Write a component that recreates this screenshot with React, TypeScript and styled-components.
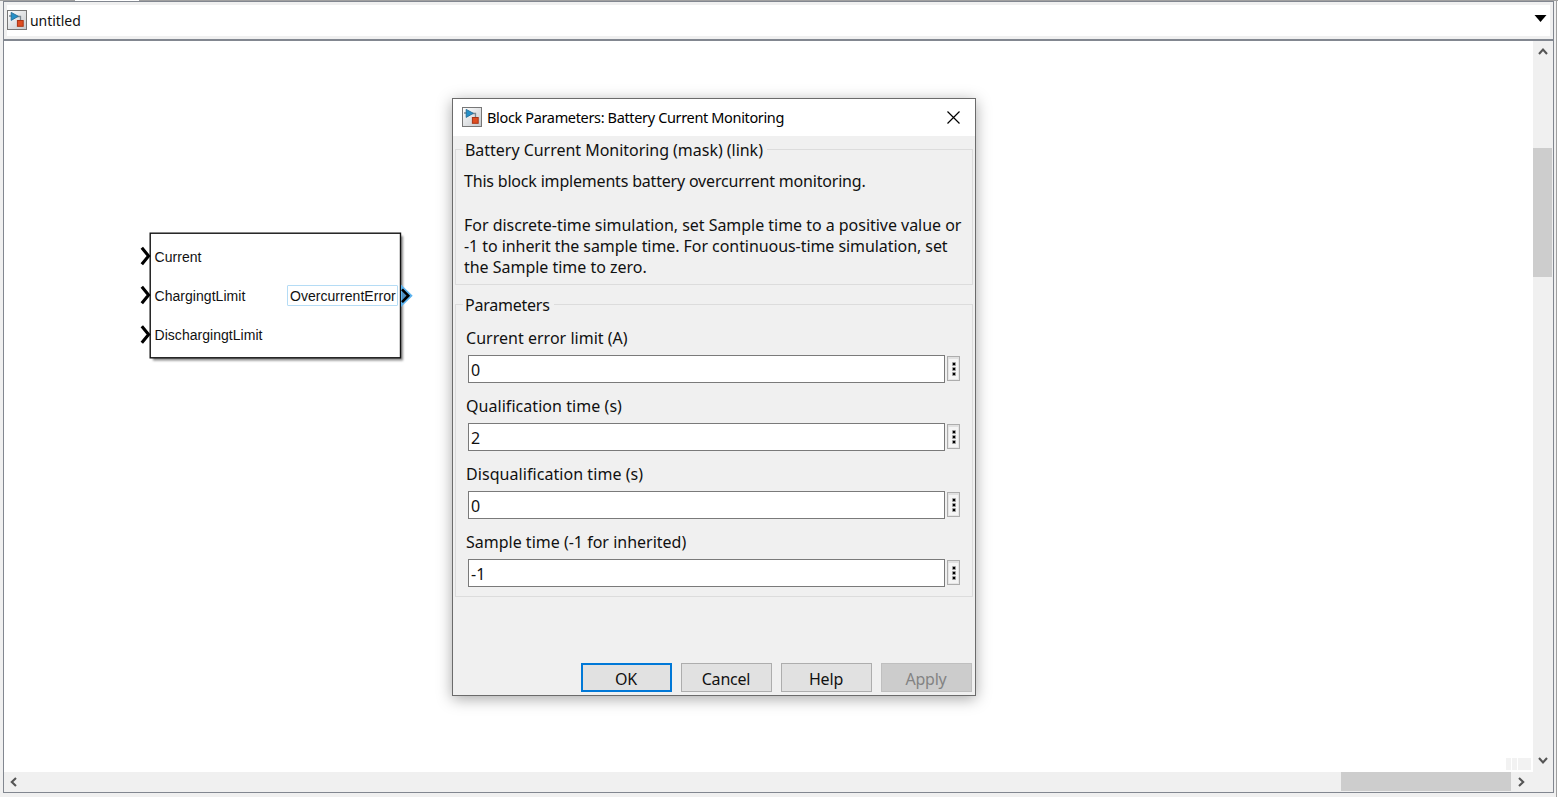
import React from 'react';
import styled, { createGlobalStyle, css } from 'styled-components';

const GlobalStyle = createGlobalStyle`
  * { box-sizing: border-box; }
  body { margin: 0; background: #f0f0f0; overflow: hidden; }
`;

const uiFont = css`
  font-family: 'Noto Sans', 'Open Sans', sans-serif;
  color: #111;
  white-space: pre;
`;

const Page = styled.div`
  position: relative;
  width: 1558px;
  height: 797px;
  display: flex;
  flex-direction: column;
  background: #f0f0f0;
`;

const TabEdge = styled.div`
  height: 1px;
  padding-left: 75px;
  background: #a0a0a0;
`;

const ActiveTab = styled.div`
  width: 64px;
  height: 1px;
  background: #fff;
`;

const Workspace = styled.div`
  display: flex;
  justify-content: space-between;
  height: 796px;
  padding-left: 3px;
`;

const OuterEdge = styled.div`
  width: 2px;
  border-left: 1px solid #a0a0a0;
  background: #fff;
`;

const Frame = styled.div`
  width: 1551px;
  height: 792px;
  border: 1px solid #828790;
  display: flex;
  flex-direction: column;
`;

const PathBar = styled.div`
  height: 39px;
  padding: 3px 3px 2px;
  border-bottom: 2px solid #828790;
  flex: none;
`;

const PathField = styled.div`
  height: 31px;
  display: flex;
  align-items: center;
  background: #fff;
`;

const PathText = styled.span`
  ${uiFont}
  flex: 1;
  margin-left: 3px;
  font-size: 14px;
  line-height: 20px;
  letter-spacing: -0.05px;
`;

const DropArrow = styled.svg`
  margin: -4px 3px 0 0;
`;

const Main = styled.div`
  display: flex;
  height: 751px;
`;

const CanvasColumn = styled.div`
  width: 1529px;
  display: flex;
  flex-direction: column;
`;

const Canvas = styled.div`
  position: relative;
  height: 731px;
  background: #fff;
`;

const VScroll = styled.div`
  width: 20px;
  display: flex;
  flex-direction: column;
  align-items: center;
  background: #f0f0f0;
  height: 751px;
`;

const VThumb = styled.div`
  width: 19px;
  height: 129px;
  margin: 91px 1px 478px 0;
  background: #cdcdcd;
`;

const HScroll = styled.div`
  height: 20px;
  display: flex;
  align-items: center;
  background: #f0f0f0;
`;

const HThumb = styled.div`
  width: 170px;
  height: 19px;
  margin: 0 5px 1px 1310px;
  background: #cdcdcd;
`;

const SizeMarks = styled.div`
  position: absolute;
  right: 2px;
  bottom: 2px;
  display: flex;
  gap: 1px;
`;

const Mark = styled.i<{ $w: number }>`
  width: ${p => p.$w}px;
  height: 12px;
  background: #f2f2f2;
`;

const Block = styled.div`
  position: absolute;
  left: 136px;
  top: 184px;
  width: 280px;
  height: 140px;
`;

const BlockBody = styled.svg`
  position: absolute;
  inset: 0;
`;

const PortLabel = styled.span<{ $x: number; $y: number }>`
  position: absolute;
  left: ${p => p.$x}px;
  top: ${p => p.$y}px;
  font: 14px/20px 'Liberation Sans', Arial, sans-serif;
  letter-spacing: 0.04px;
  color: #111;
  white-space: pre;
`;

const Dialog = styled.div`
  position: absolute;
  left: 452px;
  top: 98px;
  width: 524px;
  height: 598px;
  border: 1px solid #6b6b6b;
  background: #f0f0f0;
  box-shadow: 0 3px 14px rgba(0, 0, 0, 0.34);
  display: flex;
  flex-direction: column;
`;

const TitleBar = styled.div`
  height: 37px;
  flex: none;
  padding: 0 15px 1px 9px;
  display: flex;
  align-items: center;
  background: #fff;
`;

const Title = styled.span`
  ${uiFont}
  flex: 1;
  margin-left: 5px;
  font-size: 14.5px;
  line-height: 20px;
  letter-spacing: -0.35px;
  color: #000;
`;

const Group = styled.div<{ $top: number; $h: number }>`
  margin: ${p => p.$top}px 2px 0;
  height: ${p => p.$h}px;
  border: 1px solid #dcdcdc;
  display: flex;
  flex-direction: column;
  align-items: flex-start;
  flex: none;
`;

const Legend = styled.span<{ $s: number }>`
  ${uiFont}
  font-size: 16px;
  line-height: 22px;
  letter-spacing: ${p => p.$s}px;
  margin: -11px 0 0 7px;
  padding: 0 4px 0 2px;
  background: #f0f0f0;
`;

const Line = styled.span<{ $s: number; $gap?: number }>`
  ${uiFont}
  font-size: 16px;
  line-height: 21px;
  height: 21px;
  letter-spacing: ${p => p.$s}px;
  margin: ${p => p.$gap ?? 0}px 0 0 8px;
`;

const Field = styled.label<{ $first?: boolean }>`
  display: flex;
  flex-direction: column;
  align-items: flex-start;
  height: 68px;
  margin-top: ${p => (p.$first ? 11 : 0)}px;
  flex: none;
`;

const FieldLabel = styled.span<{ $s: number }>`
  ${uiFont}
  font-size: 16px;
  line-height: 22px;
  letter-spacing: ${p => p.$s}px;
  margin-left: 10px;
`;

const FieldRow = styled.div`
  display: flex;
  align-items: flex-start;
  gap: 2px;
  margin: 6px 0 0 12px;
`;

const Input = styled.div`
  ${uiFont}
  width: 477px;
  height: 28px;
  padding: 2px 2px 0;
  border: 1px solid #7a7a7a;
  background: #fff;
  font-size: 16px;
  line-height: 24px;
`;

const More = styled.div`
  width: 13px;
  height: 25px;
  margin-top: 1px;
  border: 1px solid #adadad;
  background: #f5f5f5;
  box-shadow: inset 0 2px #e1e1e1, inset 0 0 0 1px #e6e6e6;
  display: flex;
  flex-direction: column;
  align-items: center;
  gap: 1px;
  padding: 5px 0 0 1px;
`;

const Dot = styled.i`
  width: 4px;
  height: 4px;
  background: #000;
  border: 1px solid #999;
  border-radius: 1px;
`;

const Buttons = styled.div`
  display: flex;
  gap: 9px;
  margin: auto 3px 3px auto;
`;

const Button = styled.div<{ $kind?: 'default' | 'disabled' }>`
  ${uiFont}
  width: 91px;
  height: 29px;
  display: flex;
  align-items: center;
  justify-content: center;
  padding: 2px 1px 0 0;
  font-size: 16px;
  line-height: 22px;
  letter-spacing: -0.2px;
  border: 1px solid #adadad;
  background: #e1e1e1;
  ${p => p.$kind === 'default' && css`border: 2px solid #0078d7;`}
  ${p => p.$kind === 'disabled' && css`
    background: #ccc;
    border-color: #bfbfbf;
    color: #838383;
  `}
`;

const IconSvg = styled.svg`
  flex: none;
  margin-bottom: 1px;
`;

const ModelIcon = () => (
  <IconSvg width="20" height="20" viewBox="0 0 20 20">
    <defs>
      <linearGradient id="tile" x1="0" y1="0" x2="1" y2="1">
        <stop offset="0" stopColor="#fff" />
        <stop offset="1" stopColor="#c4c8cc" />
      </linearGradient>
    </defs>
    <rect x=".5" y=".5" width="19" height="19" fill="url(#tile)" stroke="#777" />
    <path d="M2 6H5M10 6.5H13.5V10" fill="none" stroke="#7d8890" strokeWidth="1.3" />
    <path d="M4.2 2.4L11.3 6.3L4.2 10.4Z" fill="#2590c8" stroke="#236c96" strokeWidth=".9" />
    <rect x="10.4" y="10.5" width="5.8" height="5.8" fill="#df4d21" stroke="#a83415" />
  </IconSvg>
);

const chevrons = {
  up: 'M1 7L5 2.6L9 7',
  down: 'M1 3L5 7.4L9 3',
  left: 'M7 1L2.8 5L7 9',
  right: 'M3 1L7.2 5L3 9',
};

const ChevronSvg = styled.svg<{ $m: string }>`
  flex: none;
  margin: ${p => p.$m};
`;

const Chevron = ({ dir, m }: { dir: keyof typeof chevrons; m: string }) => (
  <ChevronSvg width="10" height="10" $m={m}>
    <path d={chevrons[dir]} fill="none" stroke="#555" strokeWidth="2.1" />
  </ChevronSvg>
);

const fields = [
  { label: 'Current error limit (A)', value: '0', s: 0.02 },
  { label: 'Qualification time (s)', value: '2', s: 0.05 },
  { label: 'Disqualification time (s)', value: '0', s: 0.06 },
  { label: 'Sample time (-1 for inherited)', value: '-1', s: 0 },
];

const MonitoringBlock = () => (
  <Block>
    <BlockBody width="280" height="140">
      <defs>
        <filter id="soft" x="-10%" y="-10%" width="120%" height="125%">
          <feGaussianBlur stdDeviation="1.3" />
        </filter>
      </defs>
      <rect x="13" y="11" width="250" height="124.5" fill="#8a8a8a" filter="url(#soft)" />
      <rect x="10.2" y="8.2" width="250.3" height="124.6" fill="#fff" stroke="#111" strokeWidth="1.4" />
      {[31, 70, 109.5].map(y => (
        <path key={y} d={`M1.8 ${y - 8.3}L8.6 ${y}L1.8 ${y + 8.3}`} fill="none" stroke="#000" strokeWidth="3.1" />
      ))}
      <rect x="147.5" y="60.5" width="110" height="20" rx=".5" fill="#fff" stroke="#b5dcf5" />
      <path d="M261 59.5L272.7 70.7L261 82Z" fill="#5cb3ef" />
      <path d="M262 64.3L268.3 70.7L262 77.2" fill="#4f8fbf" stroke="#000" strokeWidth="2.6" />
    </BlockBody>
    <PortLabel $x={14.5} $y={22}>Current</PortLabel>
    <PortLabel $x={14.5} $y={61}>ChargingtLimit</PortLabel>
    <PortLabel $x={14.5} $y={100}>DischargingtLimit</PortLabel>
    <PortLabel $x={150} $y={61}>OvercurrentError</PortLabel>
  </Block>
);

const ParametersDialog = () => (
  <Dialog>
    <TitleBar>
      <ModelIcon />
      <Title>Block Parameters: Battery Current Monitoring</Title>
      <svg width="13" height="13">
        <path d="M.5 .5L12.5 12.5M12.5 .5L.5 12.5" stroke="#000" strokeWidth="1.2" />
      </svg>
    </TitleBar>
    <Group $top={13} $h={136}>
      <Legend $s={-0.03}>Battery Current Monitoring (mask) (link)</Legend>
      <Line $s={-0.19} $gap={10}>This block implements battery overcurrent monitoring.</Line>
      <Line $s={-0.03} $gap={23}>For discrete-time simulation, set Sample time to a positive value or</Line>
      <Line $s={-0.065}>-1 to inherit the sample time. For continuous-time simulation, set</Line>
      <Line $s={-0.02}>the Sample time to zero.</Line>
    </Group>
    <Group $top={19} $h={293}>
      <Legend $s={-0.23}>Parameters</Legend>
      {fields.map((f, i) => (
        <Field key={f.label} $first={i === 0}>
          <FieldLabel $s={f.s}>{f.label}</FieldLabel>
          <FieldRow>
            <Input>{f.value}</Input>
            <More><Dot /><Dot /><Dot /></More>
          </FieldRow>
        </Field>
      ))}
    </Group>
    <Buttons>
      <Button $kind="default">OK</Button>
      <Button>Cancel</Button>
      <Button>Help</Button>
      <Button $kind="disabled">Apply</Button>
    </Buttons>
  </Dialog>
);

export default function App() {
  return (
    <>
      <GlobalStyle />
      <Page>
        <TabEdge><ActiveTab /></TabEdge>
        <Workspace>
          <Frame>
            <PathBar>
              <PathField>
                <ModelIcon />
                <PathText>untitled</PathText>
                <DropArrow width="13" height="7"><path d="M.5 0H12.5L6.5 7Z" fill="#000" /></DropArrow>
              </PathField>
            </PathBar>
            <Main>
              <CanvasColumn>
                <Canvas>
                  <MonitoringBlock />
                  <SizeMarks><Mark $w={5} /><Mark $w={5} /><Mark $w={13} /></SizeMarks>
                </Canvas>
                <HScroll>
                  <Chevron dir="left" m="0 12px 0 5px" />
                  <HThumb />
                  <Chevron dir="right" m="0" />
                </HScroll>
              </CanvasColumn>
              <VScroll>
                <Chevron dir="up" m="6px 1px 0 0" />
                <VThumb />
                <Chevron dir="down" m="0 1px 0 0" />
              </VScroll>
            </Main>
          </Frame>
          <OuterEdge />
        </Workspace>
        <ParametersDialog />
      </Page>
    </>
  );
}
